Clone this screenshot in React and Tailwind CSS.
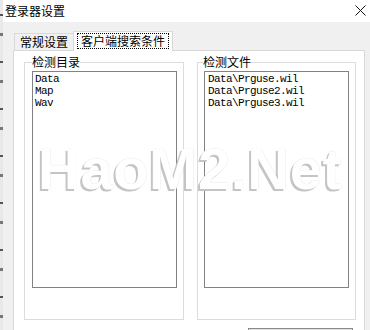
import React from "react";

const cjk = "font-['Microsoft_YaHei','Noto_Sans_CJK_SC',sans-serif]";

function ListBox({ items, pl }) {
  return (
    <div className={`h-[217px] w-[145px] border border-[#828282] bg-white pt-[1px] ${pl} font-['Liberation_Mono',monospace] text-[11px] leading-[12px] tracking-[-0.6px] text-black`}>
      {items.map((t) => (
        <div key={t} className="whitespace-pre">{t}</div>
      ))}
    </div>
  );
}

export default function App() {
  return (
    <div className={`relative flex h-[330px] w-[370px] overflow-hidden bg-[#f0f0f0] text-black ${cjk}`}>
      <div className="w-[3px] shrink-0 bg-[repeating-linear-gradient(to_bottom,#e8e8e8_0px,#e8e8e8_14px,#555_14px,#555_16px,#e8e8e8_16px,#e8e8e8_33px,#777_33px,#777_36px,#e8e8e8_36px,#e8e8e8_47px)]" />
      <div className="flex min-w-0 flex-1 flex-col">
        <div className="flex h-[22px] shrink-0 items-center justify-between bg-white pl-[2px] pr-[4px]">
          <span className="pb-[1px] text-[12px] leading-[14px]">登录器设置</span>
          <svg width="11" height="11" viewBox="0 0 11 11" className="mb-[1px]">
            <path d="M0.5 0.5 L10.5 10.5 M10.5 0.5 L0.5 10.5" stroke="#111" strokeWidth="1" fill="none" />
          </svg>
        </div>
        <div className="flex flex-1 flex-col pl-[10px] pt-[9px]">
          <div className="flex h-[19px] items-end">
            <div className="ml-[1px] flex h-[17px] w-[59px] items-center justify-center border-l border-t border-[#d9d9d9] bg-[#f0f0f0] text-[12px] leading-[14px]">
              常规设置
            </div>
            <div className="relative z-10 -mb-px flex h-[20px] w-[100px] items-start justify-center border-l border-r border-t border-[#d9d9d9] bg-white pt-[1px]">
              <span className="border border-dotted border-black px-[3px] text-[12px] leading-[14px]">客户端搜索条件</span>
            </div>
          </div>
          <div className="flex w-[352px] flex-1 flex-col border border-[#d9d9d9] bg-white">
            <div className="flex pl-[10px]">
              <fieldset className="mt-[4px] w-[160px] border border-[#dcdcdc] pb-[31px] pl-[7px] pr-[6px] pt-[2px]">
                <legend className="px-0 text-[12px] leading-[14px]">检测目录</legend>
                <ListBox items={["Data", "Map", "Wav"]} pl="pl-[2px]" />
              </fieldset>
              <fieldset className="ml-[13px] mt-[4px] w-[159px] border border-[#dcdcdc] pb-[31px] pl-[6px] pr-[6px] pt-[2px]">
                <legend className="-ml-[1px] px-0 text-[12px] leading-[14px]">检测文件</legend>
                <ListBox items={["Data\\Prguse.wil", "Data\\Prguse2.wil", "Data\\Prguse3.wil"]} pl="pl-[3px]" />
              </fieldset>
            </div>
            <div className="flex justify-end pr-[11px] pt-[8px]">
              <div className="h-[24px] w-[105px] border border-[#8a8a8a] bg-[#e1e1e1]" />
            </div>
          </div>
        </div>
      </div>
      <div className="pointer-events-none absolute left-[38px] top-[140px] font-['Liberation_Sans',sans-serif] text-[58px] font-bold leading-[58px] tracking-[0.5px] text-white [text-shadow:-2px_2px_0_#c4c4c4,0_0_1px_#cfcfcf]">
        HaoM2.Net
      </div>
    </div>
  );
}
